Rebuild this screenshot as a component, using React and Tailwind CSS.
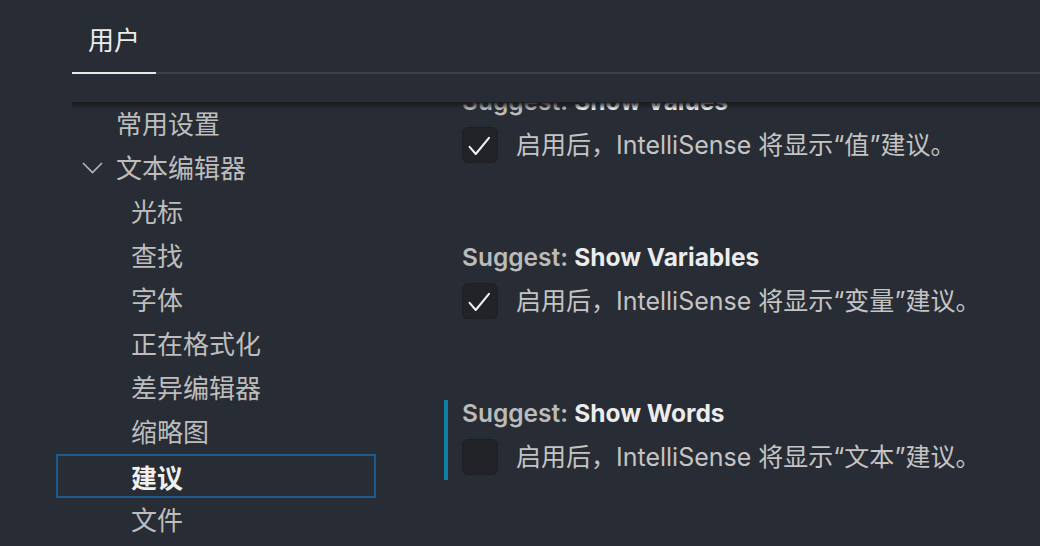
const toc = [
  { label: '常用设置', depth: 1 },
  { label: '文本编辑器', depth: 1, open: true },
  { label: '光标', depth: 2 },
  { label: '查找', depth: 2 },
  { label: '字体', depth: 2 },
  { label: '正在格式化', depth: 2 },
  { label: '差异编辑器', depth: 2 },
  { label: '缩略图', depth: 2 },
  { label: '建议', depth: 2, selected: true },
  { label: '文件', depth: 2 },
];

const settings = [
  { name: 'Show Values', word: '值', checked: true },
  { name: 'Show Variables', word: '变量', checked: true },
  { name: 'Show Words', word: '文本', checked: false, focused: true },
];

function Checkbox({ checked }) {
  return (
    <div className="w-[36px] h-[36px] shrink-0 rounded-[6px] bg-[#212329] border border-[#1d1f23] flex items-center justify-center">
      {checked && (
        <svg width="36" height="36" viewBox="0 0 36 36" fill="none">
          <path d="M7 20 L13.5 27.5 L27.5 10.5" stroke="#f0f0f0" strokeWidth="2.2" strokeLinecap="round" strokeLinejoin="round" />
        </svg>
      )}
    </div>
  );
}

function TocItem({ item }) {
  const pad = item.depth === 1 ? 'pl-[60px]' : 'pl-[75px]';
  return (
    <div
      className={`relative h-[44px] leading-[46px] text-[26px] ${pad} ${
        item.selected
          ? 'border-2 border-[#1b5a8a] text-[#f0f0f0] font-bold leading-[42px]'
          : 'text-[#bdbdbd]'
      }`}
    >
      {item.open && (
        <svg
          className="absolute left-[26px] top-[16px]"
          width="21"
          height="12"
          viewBox="0 0 21 12"
          fill="none"
        >
          <path d="M1 1 L10.5 10.5 L20 1" stroke="#b5b5b5" strokeWidth="1.6" />
        </svg>
      )}
      <span className={item.selected ? '-ml-[2px]' : ''}>{item.label}</span>
    </div>
  );
}

function Setting({ s }) {
  return (
    <div
      className={`border-l-4 pl-[14px] pb-[5px] mb-[76px] ${
        s.focused ? 'border-[#0f7fa5]' : 'border-transparent'
      }`}
    >
      <div className="h-[26px] leading-[26px] text-[24.5px] font-semibold whitespace-nowrap">
        <span className="text-[#bbbbbb]">Suggest: </span>
        <span className="text-[#ececec] font-bold">{s.name}</span>
      </div>
      <div className="mt-[13px] h-[36px] flex items-center gap-[18px]">
        <Checkbox checked={s.checked} />
        <span className="text-[25px] leading-[36px] text-[#c4c4c4] whitespace-nowrap">
          启用后，IntelliSense 将显示“{s.word}”建议。
        </span>
      </div>
    </div>
  );
}

export default function App() {
  return (
    <div
      className="w-[1040px] h-[546px] overflow-hidden bg-[#282c34] flex flex-col"
      style={{ fontFamily: 'Inter, "Noto Sans CJK SC", sans-serif' }}
    >
      <div className="pl-[72px] shrink-0">
        <div className="h-[72px] flex items-end">
          <div className="w-[84px] h-full flex items-center justify-center text-[26px] text-[#ececec] pt-[8px]">
            用户
          </div>
        </div>
        <div className="h-[2px] bg-[#3f4042] flex">
          <div className="w-[84px] bg-[#e8e8e8]" />
        </div>
        <div className="h-[28px]" />
      </div>

      <div className="relative flex-1 flex overflow-hidden">
        <div className="absolute top-0 left-[72px] right-0 h-[7px] bg-gradient-to-b from-[#16181c] to-transparent z-10" />
        <div className="w-[320px] ml-[56px] shrink-0">
          {toc.map((item) => (
            <TocItem key={item.label} item={item} />
          ))}
        </div>
        <div className="ml-[68px] -mt-[14px]">
          {settings.map((s) => (
            <Setting key={s.name} s={s} />
          ))}
        </div>
      </div>
    </div>
  );
}
